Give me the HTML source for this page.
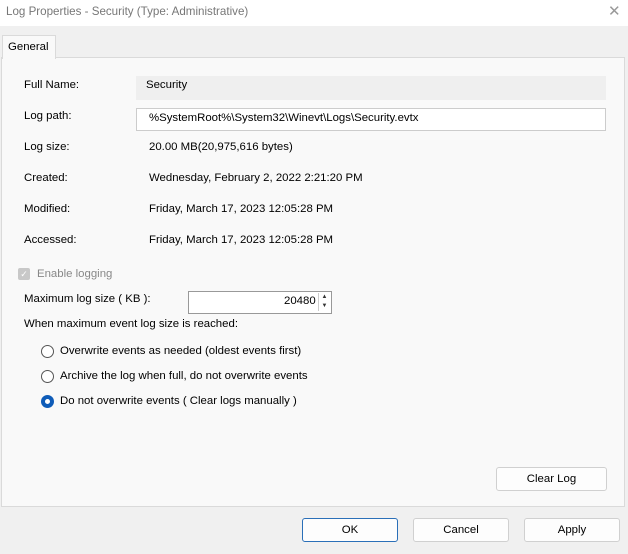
<!DOCTYPE html><html><head><style>
body{margin:0;width:628px;height:554px;background:#f0f0f0;font-family:"Liberation Sans",sans-serif;font-size:11.4px;color:#000;position:relative;overflow:hidden}
.a{position:absolute;white-space:nowrap}
.title{position:absolute;left:0;top:0;width:628px;height:26px;background:#fff}
.panel{position:absolute;left:1px;top:57px;width:622px;height:448px;background:#f9f9f9;border:1px solid #dadada}
.tab{position:absolute;left:2px;top:35px;width:52px;height:23px;background:#f9f9f9;border:1px solid #dadada;border-bottom:none;z-index:2}
.btn{position:absolute;background:#fdfdfd;border:1px solid #d0d0d0;border-radius:3px;text-align:center;line-height:22px;height:22px}
.radio{position:absolute;width:11px;height:11px;border:1px solid #555;border-radius:50%;background:#fff}
</style></head><body>
<div class="title"></div>
<div class="a" style="left:6px;top:5px;color:#777;font-size:11.6px">Log Properties - Security (Type: Administrative)</div>
<div class="a" style="left:608px;top:2px;color:#999;font-size:15px;font-weight:100">&#x2715;</div>
<div class="panel"></div>
<div class="tab"><div class="a" style="left:5px;top:5px">General</div></div>
<div class="a" style="left:24px;top:79px">Full Name:</div>
<div class="a" style="left:136px;top:76px;width:470px;height:24px;background:#efefef"></div>
<div class="a" style="left:146px;top:79px">Security</div>
<div class="a" style="left:24px;top:110px">Log path:</div>
<div class="a" style="left:136px;top:108px;width:468px;height:21px;background:#fff;border:1px solid #ccc"></div>
<div class="a" style="left:149px;top:112px">%SystemRoot%\System32\Winevt\Logs\Security.evtx</div>
<div class="a" style="left:24px;top:141px">Log size:</div><div class="a" style="left:149px;top:141px">20.00 MB(20,975,616 bytes)</div>
<div class="a" style="left:24px;top:172px">Created:</div><div class="a" style="left:149px;top:172px">Wednesday, February 2, 2022 2:21:20 PM</div>
<div class="a" style="left:24px;top:203px">Modified:</div><div class="a" style="left:149px;top:203px">Friday, March 17, 2023 12:05:28 PM</div>
<div class="a" style="left:24px;top:234px">Accessed:</div><div class="a" style="left:149px;top:234px">Friday, March 17, 2023 12:05:28 PM</div>
<div class="a" style="left:18px;top:268px;width:12px;height:12px;background:#c8c8c8;border-radius:2px;color:#fff;font-size:9px;text-align:center;line-height:12px">&#x2713;</div>
<div class="a" style="left:37px;top:268px;color:#888">Enable logging</div>
<div class="a" style="left:24px;top:293px">Maximum log size ( KB ):</div>
<div class="a" style="left:188px;top:291px;width:142px;height:21px;background:#fff;border:1px solid #999"></div>
<div class="a" style="left:284px;top:295px">20480</div>
<div class="a" style="left:318px;top:293px;width:11px;height:18px;border-left:1px solid #ccc;font-size:6px;line-height:9px;text-align:center;color:#333">▲<br>▼</div>
<div class="a" style="left:24px;top:318px">When maximum event log size is reached:</div>
<div class="radio" style="left:41px;top:345px"></div><div class="a" style="left:60px;top:345px">Overwrite events as needed (oldest events first)</div>
<div class="radio" style="left:41px;top:370px"></div><div class="a" style="left:60px;top:370px">Archive the log when full, do not overwrite events</div>
<div class="radio" style="left:41px;top:395px;background:#fff;border:4px solid #0f5cb8;width:5px;height:5px"></div><div class="a" style="left:60px;top:395px">Do not overwrite events ( Clear logs manually )</div>
<div class="btn" style="left:496px;top:467px;width:109px">Clear Log</div>
<div class="btn" style="left:302px;top:518px;width:94px;border-color:#2a6fb8">OK</div>
<div class="btn" style="left:413px;top:518px;width:94px">Cancel</div>
<div class="btn" style="left:524px;top:518px;width:94px">Apply</div>
</body></html>
